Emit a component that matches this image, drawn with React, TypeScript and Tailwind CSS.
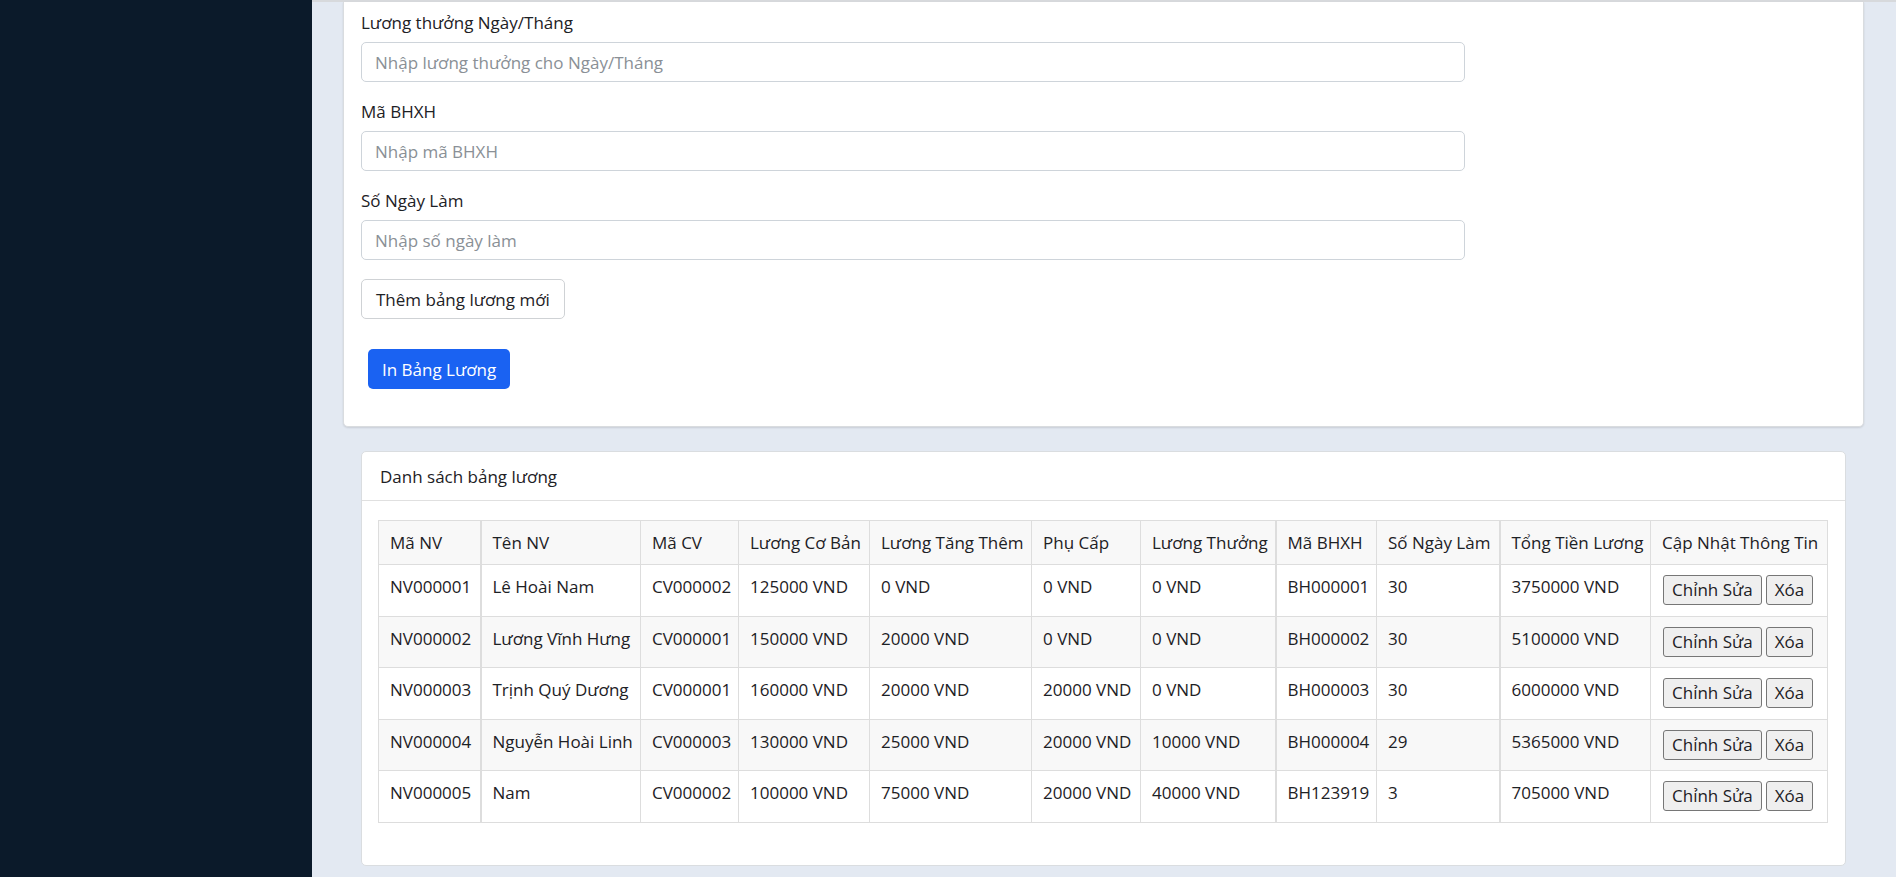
import { useState } from 'react'

type Luong = {
  maNV: string
  tenNV: string
  maCV: string
  luongCoBan: number
  luongTangThem: number
  phuCap: number
  luongThuong: number
  maBHXH: string
  soNgayLam: number
  tongTien: number
}

const rows: Luong[] = [
  { maNV: 'NV000001', tenNV: 'Lê Hoài Nam', maCV: 'CV000002', luongCoBan: 125000, luongTangThem: 0, phuCap: 0, luongThuong: 0, maBHXH: 'BH000001', soNgayLam: 30, tongTien: 3750000 },
  { maNV: 'NV000002', tenNV: 'Lương Vĩnh Hưng', maCV: 'CV000001', luongCoBan: 150000, luongTangThem: 20000, phuCap: 0, luongThuong: 0, maBHXH: 'BH000002', soNgayLam: 30, tongTien: 5100000 },
  { maNV: 'NV000003', tenNV: 'Trịnh Quý Dương', maCV: 'CV000001', luongCoBan: 160000, luongTangThem: 20000, phuCap: 20000, luongThuong: 0, maBHXH: 'BH000003', soNgayLam: 30, tongTien: 6000000 },
  { maNV: 'NV000004', tenNV: 'Nguyễn Hoài Linh', maCV: 'CV000003', luongCoBan: 130000, luongTangThem: 25000, phuCap: 20000, luongThuong: 10000, maBHXH: 'BH000004', soNgayLam: 29, tongTien: 5365000 },
  { maNV: 'NV000005', tenNV: 'Nam', maCV: 'CV000002', luongCoBan: 100000, luongTangThem: 75000, phuCap: 20000, luongThuong: 40000, maBHXH: 'BH123919', soNgayLam: 3, tongTien: 705000 },
]

const fields = [
  { label: 'Lương thưởng Ngày/Tháng', placeholder: 'Nhập lương thưởng cho Ngày/Tháng' },
  { label: 'Mã BHXH', placeholder: 'Nhập mã BHXH' },
  { label: 'Số Ngày Làm', placeholder: 'Nhập số ngày làm' },
]

const headers = [
  'Mã NV',
  'Tên NV',
  'Mã CV',
  'Lương Cơ Bản',
  'Lương Tăng Thêm',
  'Phụ Cấp',
  'Lương Thưởng',
  'Mã BHXH',
  'Số Ngày Làm',
  'Tổng Tiền Lương',
  'Cập Nhật Thông Tin',
]

const colWidths = ['w-[102px]', 'w-[160px]', 'w-[98px]', 'w-[131px]', 'w-[162px]', 'w-[109px]', 'w-[135px]', 'w-[101px]', 'w-[123px]', 'w-[151px]', 'w-[177px]']

// cot co vien trai day hon trong anh goc
const thick = [1, 7, 9]

const cellCls = (i: number) =>
  `border border-[#dddddd] px-[11px] py-[9px] text-left align-top font-normal leading-[25px] whitespace-nowrap overflow-hidden ${
    thick.includes(i) ? 'border-l-2' : ''
  }`

const vnd = (n: number) => `${n} VND`

const App = () => {
  const [values, setValues] = useState<string[]>(['', '', ''])

  return (
    <div className="flex h-[877px] overflow-hidden font-['Open_Sans','Noto_Sans',sans-serif] text-[17px] text-[#1d2125]">
      <aside className="w-[312px] shrink-0 bg-[#0b1a2a]" />

      <main className="min-w-0 flex-1 border-t-2 border-[#d7d9dc] bg-[#e3e9f2] pl-[31px] pr-[32px]">
        <div className="rounded-b-[5px] border-x border-b border-[#d9dcdf] bg-white pb-[37px] pl-[17px] pt-[8px] shadow-[0_1px_2px_rgba(0,0,0,0.12)]">
          <div className="w-[1104px]">
            {fields.map((f, i) => (
              <div key={f.label} className="mb-[17px]">
                <label className="mb-[7px] block leading-[25px]">{f.label}</label>
                <input
                  value={values[i]}
                  onChange={(e) => setValues(values.map((v, j) => (j === i ? e.target.value : v)))}
                  placeholder={f.placeholder}
                  className="block h-[40px] w-full rounded-[5px] border border-[#ced4da] bg-white px-[13px] text-[17px] outline-none placeholder:text-[#8a9096]"
                />
              </div>
            ))}
          </div>

          <button className="mt-[2px] h-[40px] rounded-[5px] border border-[#cfd2d5] bg-white px-[14px] leading-[25px]">
            Thêm bảng lương mới
          </button>

          <div className="ml-[7px] mt-[30px]">
            <button className="h-[40px] rounded-[5px] bg-[#1a62f2] px-[14px] leading-[25px] text-white">
              In Bảng Lương
            </button>
          </div>
        </div>

        <div className="mx-[18px] mt-[24px] rounded-[5px] border border-[#dadde0] bg-white">
          <div className="border-b border-[#e0e0e0] px-[18px] pb-[11px] pt-[12px] leading-[25px]">Danh sách bảng lương</div>
          <div className="px-[16px] pb-[42px] pt-[19px]">
            <table className="w-[1449px] table-fixed border-collapse">
              <colgroup>
                {colWidths.map((w, i) => (
                  <col key={i} className={w} />
                ))}
              </colgroup>
              <thead>
                <tr className="h-[44px] bg-[#f8f8f8]">
                  {headers.map((h, i) => (
                    <th key={h} className={cellCls(i)}>
                      {h}
                    </th>
                  ))}
                </tr>
              </thead>
              <tbody>
                {rows.map((r, idx) => {
                  const cells = [
                    r.maNV,
                    r.tenNV,
                    r.maCV,
                    vnd(r.luongCoBan),
                    vnd(r.luongTangThem),
                    vnd(r.phuCap),
                    vnd(r.luongThuong),
                    r.maBHXH,
                    String(r.soNgayLam),
                    vnd(r.tongTien),
                  ]
                  return (
                    <tr key={r.maNV} className={`h-[51.6px] ${idx % 2 === 1 ? 'bg-[#f8f8f8]' : 'bg-white'}`}>
                      {cells.map((c, i) => (
                        <td key={i} className={cellCls(i)}>
                          {c}
                        </td>
                      ))}
                      <td className={`${cellCls(10)} pb-[8px] pt-[10px]`}>
                        <div className="flex gap-[4px] pl-[1px]">
                          <button className="h-[30px] rounded-[3px] border border-[#767676] bg-[#efefef] px-[8px] leading-[26px]">
                            Chỉnh Sửa
                          </button>
                          <button className="h-[30px] rounded-[3px] border border-[#767676] bg-[#efefef] px-[8px] leading-[26px]">
                            Xóa
                          </button>
                        </div>
                      </td>
                    </tr>
                  )
                })}
              </tbody>
            </table>
          </div>
        </div>
      </main>
    </div>
  )
}

export default App
